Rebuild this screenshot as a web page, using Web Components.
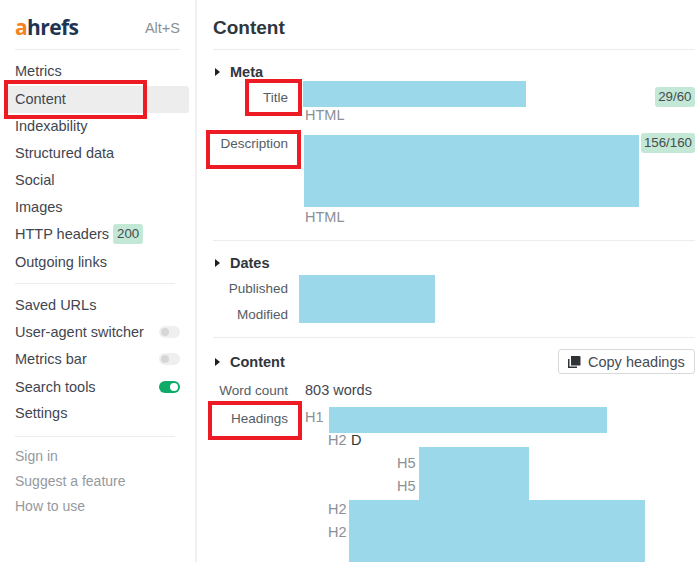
<!DOCTYPE html>
<html><head><meta charset="utf-8"><style>
html,body{margin:0;padding:0;background:#fff;overflow:hidden}
body{font-family:"Liberation Sans",Arial,sans-serif;font-size:14.5px;color:#3f4650}
</style></head><body>
<x-app>
  <x-sidebar slot="side">
    <x-brand></x-brand>
    <x-rule></x-rule>
    <x-nav-item style="margin-top:7px">Metrics</x-nav-item>
    <x-nav-item active style="margin-top:1px">Content</x-nav-item>
    <x-nav-item>Indexability</x-nav-item>
    <x-nav-item>Structured data</x-nav-item>
    <x-nav-item>Social</x-nav-item>
    <x-nav-item>Images</x-nav-item>
    <x-nav-item>HTTP headers<x-badge slot="after" style="margin-left:4px">200</x-badge></x-nav-item>
    <x-nav-item style="margin-top:1px">Outgoing links</x-nav-item>
    <x-rule style="margin:7px 5px 8px 0"></x-rule>
    <x-nav-item>Saved URLs</x-nav-item>
    <x-nav-item>User-agent switcher<x-toggle slot="end"></x-toggle></x-nav-item>
    <x-nav-item>Metrics bar<x-toggle slot="end"></x-toggle></x-nav-item>
    <x-nav-item>Search tools<x-toggle slot="end" on></x-toggle></x-nav-item>
    <x-nav-item style="margin-top:-1px">Settings</x-nav-item>
    <x-rule style="margin:10px 5px 6px 0"></x-rule>
    <x-foot-link>Sign in</x-foot-link>
    <x-foot-link>Suggest a feature</x-foot-link>
    <x-foot-link>How to use</x-foot-link>
  </x-sidebar>
  <x-main slot="main">
    <x-title>Content</x-title>
    <x-section heading="Meta" style="height:190px;--hp:9.5px">
      <x-row label="Title" style="margin-top:-4px;--lp:8.5px">
        <x-field>
          <x-redact style="width:223px;height:26px;margin-left:-2px"></x-redact>
          <x-muted>HTML</x-muted>
          <x-badge slot="end" style="margin-top:6px;padding:0 3.5px">29/60</x-badge>
        </x-field>
      </x-row>
      <x-row label="Description" style="margin-top:11px;--lp:0px">
        <x-field>
          <x-redact style="width:335px;height:72px;margin-left:-1px"></x-redact>
          <x-muted style="margin-top:2px">HTML</x-muted>
          <x-badge slot="end" style="margin-top:-2px;padding:0 3px">156/160</x-badge>
        </x-field>
      </x-row>
    </x-section>
    <x-section heading="Dates" ruled style="height:97px;--hp:9.5px">
      <x-dates style="margin-top:-1px"></x-dates>
    </x-section>
    <x-section heading="Content" ruled style="--hp:11.5px">
      <x-button slot="action">Copy headings</x-button>
      <x-row label="Word count" style="margin-top:7px"><span>803 words</span></x-row>
      <x-row label="Headings" style="margin-top:8.5px;--lp:3px">
        <div style="display:block">
          <x-hgroup tag="H1" style="--w:24px;--pt:2px">
            <x-redact style="width:278px;height:26px"></x-redact>
          </x-hgroup>
          <x-hgroup tag="H2" style="margin-left:23px;--w:23px;height:14px;--pt:0px;margin-top:-1px;padding-bottom:1px">
            <b style="font-weight:400;color:#30363d;line-height:17px">D</b>
          </x-hgroup>
          <x-hgroup tag="H5" count="2" style="margin-left:92px;--w:22px;--pt:7.5px;--g:6px">
            <x-redact style="width:110px;height:53px"></x-redact>
          </x-hgroup>
          <x-hgroup tag="H2" count="2" style="margin-left:23px;--w:21px;--pt:.5px;--g:6px">
            <x-redact style="width:296px;height:70px"></x-redact>
          </x-hgroup>
        </div>
      </x-row>
    </x-section>
  </x-main>
  <x-mark style="left:4px;top:80px;width:143px;height:39px"></x-mark>
  <x-mark style="left:245px;top:79px;width:57px;height:37px"></x-mark>
  <x-mark style="left:206px;top:130px;width:95px;height:39px"></x-mark>
  <x-mark style="left:208px;top:401px;width:94px;height:39px"></x-mark>
</x-app>
<script>
function def(name, css, html){
  customElements.define(name, class extends HTMLElement{
    constructor(){super();const r=this.attachShadow({mode:'open'});
      r.innerHTML='<style>'+css+'</style>'+(typeof html==='function'?html(this):html);}
  });
}
def('x-app',':host{display:flex;position:relative;width:700px;height:562px;overflow:hidden}','<slot name="side"></slot><slot name="main"></slot><slot></slot>');
def('x-sidebar',':host{display:block;box-sizing:border-box;width:197px;height:562px;padding:0 15px;border-right:2px solid #f1f1f1;flex:none}','<slot></slot>');
def('x-brand',`:host{display:flex;align-items:center;justify-content:space-between;height:49px}
 .l{font:700 21px/1 "Open Sans","Liberation Sans",sans-serif;letter-spacing:-.6px;color:#1e3552;display:block;margin-top:5px}
 .l b{color:#f58220;font-weight:700}
 .k{color:#8b8f94;font-size:14.5px;margin-top:6px}`,
 '<span class="l"><b>a</b>hrefs</span><span class="k">Alt+S</span>');
def('x-rule',':host{display:block;height:1px;background:#ececec}','');
def('x-nav-item',`:host{display:flex;align-items:center;height:27.1px;position:relative;white-space:nowrap;color:#3f4650;z-index:0}
 :host([active])::before{content:"";position:absolute;left:-9px;right:-9px;top:1px;height:26.5px;background:#ededed;border-radius:3px;z-index:-1}
 .e{margin-left:auto;display:flex}`,
 '<slot></slot><slot name="after"></slot><span class="e"><slot name="end"></slot></span>');
def('x-foot-link',':host{display:flex;align-items:center;height:25px;color:#95999e;font-size:14px}','<slot></slot>');
def('x-badge',`:host{display:inline-block;box-sizing:border-box;height:20px;line-height:20px;padding:0 4px;background:#c3e8d6;color:#454c52;border-radius:3px;font-size:13.3px;white-space:nowrap}`,'<slot></slot>');
def('x-toggle',`:host{display:block;position:relative;width:21px;height:12px;border-radius:7px;background:#efefef}
 :host::after{content:"";position:absolute;left:2px;top:2px;width:8px;height:8px;border-radius:50%;background:#d6d6d6}
 :host([on]){background:#0fa968}
 :host([on])::after{left:auto;right:2px;background:#fff}`,'');
def('x-main',':host{display:block;box-sizing:border-box;flex:1;min-width:0;padding:0 5px 0 16px}','<slot></slot>');
def('x-title',':host{display:flex;align-items:center;box-sizing:content-box;height:43px;padding-top:6px;font-weight:700;font-size:19px;color:#30363d;border-bottom:1px solid #ececec}','<slot></slot>');
def('x-section',`:host{display:block;box-sizing:border-box}
 :host([ruled]){border-top:1px solid #ececec}
 .h{display:flex;align-items:center;height:25px;padding-top:var(--hp,10px);font-weight:700;color:#30363d}
 svg{width:5px;height:8px;margin:0 10px 0 2px;flex:none}
 .a{margin-left:auto;display:flex}`,
 h=>'<div class="h"><svg viewBox="0 0 5 8"><path d="M0 0l5 4L0 8z" fill="#1c1f23"/></svg>'+h.getAttribute('heading')+'<span class="a"><slot name="action"></slot></span></div><slot></slot>');
def('x-row',`:host{display:grid;grid-template-columns:75px 1fr;column-gap:17px}
 .lab{text-align:right;padding-top:var(--lp,0);line-height:17px;color:#555c64;white-space:nowrap;font-size:13.5px}
 .v{line-height:17px;min-width:0}`,
 h=>'<div class="lab">'+h.getAttribute('label')+'</div><div class="v"><slot></slot></div>');
def('x-field',`:host{display:flex;align-items:flex-start}
 .c{display:flex;flex-direction:column;align-items:flex-start}
 .e{margin-left:auto;display:flex}`,
 '<div class="c"><slot></slot></div><span class="e"><slot name="end"></slot></span>');
def('x-redact',':host{display:block;flex:none;background:#9bd9ea}','');
def('x-muted',':host{display:block;color:#8c9096;line-height:17px}','<slot></slot>');
def('x-dates',`:host{display:grid;grid-template-columns:75px 136px;column-gap:11px}
 .l{text-align:right;color:#555c64;font-size:13.5px;line-height:17px;padding-top:5px;display:flex;flex-direction:column;gap:9px}
 .b{height:48px;background:#9bd9ea}`,
 '<div class="l"><span>Published</span><span>Modified</span></div><div class="b"></div>');
def('x-button',`:host{display:flex;align-items:center;box-sizing:border-box;width:137px;height:25px;margin-top:-1px;border:1px solid #d9d9d9;border-radius:3px;background:#fff;font-weight:400;color:#454c52;padding-left:8px;white-space:nowrap}
 svg{width:14px;height:14px;margin-right:7px;flex:none}`,
 '<svg viewBox="0 0 14 14"><path d="M4 1h8.5a1 1 0 0 1 1 1v8.5H4z" fill="#2f3338"/><path d="M1 4v9h9v-1.5H2.5V4z" fill="#2f3338"/></svg><slot></slot>');
def('x-hgroup',`:host{display:flex;align-items:flex-start;line-height:17px}
 .t{flex:none;width:var(--w,24px);padding-top:var(--pt,0);color:#8c9096;display:flex;flex-direction:column;gap:var(--g,0)}`,
 h=>{const n=+(h.getAttribute('count')||1),t=h.getAttribute('tag');let s='';for(let i=0;i<n;i++)s+='<span>'+t+'</span>';return '<div class="t">'+s+'</div><slot></slot>';});
def('x-mark',':host{position:absolute;box-sizing:border-box;border:4px solid #ed1c24;display:block}','');
</script>
</body></html>
